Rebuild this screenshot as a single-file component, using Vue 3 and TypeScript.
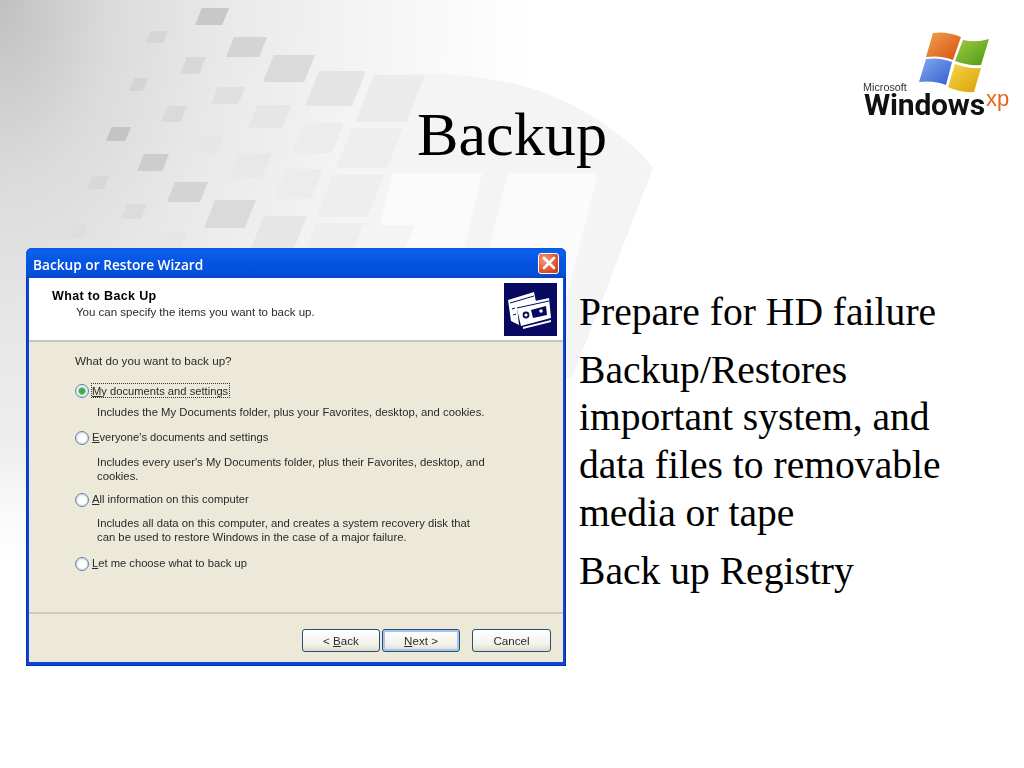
<template>
  <div class="slide">
    <!-- 背景の模様 -->
    <svg class="wallpaper" width="1024" height="768" viewBox="0 0 1024 768">
      <defs>
        <radialGradient id="wash" gradientUnits="userSpaceOnUse" cx="0" cy="0" r="560" gradientTransform="scale(1 1.6)">
          <stop offset="0" stop-color="#c0c0c0" />
          <stop offset="0.2" stop-color="#dbdbdb" />
          <stop offset="0.4" stop-color="#e9e9e9" />
          <stop offset="0.7" stop-color="#f6f6f6" />
          <stop offset="0.95" stop-color="#ffffff" />
        </radialGradient>
        <linearGradient id="fade" gradientUnits="userSpaceOnUse" x1="0" y1="440" x2="0" y2="560">
          <stop offset="0" stop-color="#ffffff" stop-opacity="0" />
          <stop offset="1" stop-color="#ffffff" />
        </linearGradient>
      </defs>
      <rect width="1024" height="768" fill="url(#wash)" />
      <path d="M370 77 C420 70 470 74 515 84 C560 93 625 130 653 168 L633 220 L585 345 L572 378 L300 378 Z" fill="#f4f4f4" />
      <path d="M392 173 L482 173 L462 260 L372 260 Z M508 173 L598 173 L560 325 L470 325 Z" fill="#fbfbfb" />
      <polygon v-for="(s, i) in squares" :key="i" :points="s.points" :fill="s.fill" />
      <rect y="440" width="1024" height="328" fill="url(#fade)" />
    </svg>

    <header class="top">
      <div></div>
      <h1 class="title">Backup</h1>
      <div class="logo">
        <svg width="170" height="110" viewBox="850 20 170 110">
          <defs>
            <linearGradient id="red" x1="0" y1="0" x2="1" y2="1">
              <stop offset="0" stop-color="#f0a050" />
              <stop offset="1" stop-color="#d8500f" />
            </linearGradient>
            <linearGradient id="green" x1="0" y1="0" x2="1" y2="1">
              <stop offset="0" stop-color="#9fcb48" />
              <stop offset="1" stop-color="#4e9a12" />
            </linearGradient>
            <linearGradient id="blue" x1="0" y1="0" x2="1" y2="1">
              <stop offset="0" stop-color="#86a9f0" />
              <stop offset="1" stop-color="#2f5fd0" />
            </linearGradient>
            <linearGradient id="yellow" x1="0" y1="0" x2="1" y2="1">
              <stop offset="0" stop-color="#f5d84a" />
              <stop offset="1" stop-color="#d9a008" />
            </linearGradient>
          </defs>
          <path d="M933 33 Q947 31 961 37 L953 60 Q941 55 926 57 Z" fill="url(#red)" />
          <path d="M963 40 Q976 43 989 39 L981 65 Q968 66 955 61 Z" fill="url(#green)" />
          <path d="M926 59 Q940 57 952 62 L946 85 Q934 80 919 82 Z" fill="url(#blue)" />
          <path d="M955 64 Q968 69 981 68 L974 92 Q960 93 948 87 Z" fill="url(#yellow)" />
        </svg>
        <span class="ms">Microsoft</span>
        <span class="win">Windows</span>
        <span class="xp">xp</span>
      </div>
    </header>

    <main class="content">
      <section class="dialog">
        <div class="titlebar">
          <span>Backup or Restore Wizard</span>
          <button class="close" aria-label="Close">
            <svg width="14" height="14" viewBox="0 0 14 14">
              <path d="M2 2 L12 12 M12 2 L2 12" stroke="#fff" stroke-width="2.6" stroke-linecap="round" />
            </svg>
          </button>
        </div>

        <div class="wiz-head">
          <div class="wiz-text">
            <strong>What to Back Up</strong>
            <span>You can specify the items you want to back up.</span>
          </div>
          <div class="tapes">
            <svg width="53" height="53" viewBox="0 0 53 53">
              <rect width="53" height="53" fill="#07085f" />
              <path d="M4 17 L30 9 L32 19 L13 24 L15 42 L7 38 Z" fill="#fff" />
              <path d="M6 20 L30 13 M8 26 L11 25 M9 32 L12 31" stroke="#07085f" stroke-width="1" />
              <path d="M12 22 L45 15 L47 35 L17 43 Z" fill="#fff" />
              <path d="M13 25 L45 18" stroke="#07085f" stroke-width="1" />
              <path d="M19 44 L47 37 L47 39 L19 46 Z" fill="#fff" />
              <path d="M27 27 L42 23 L43 32 L29 35 Z" fill="#07085f" />
              <circle cx="37" cy="28" r="1.8" fill="#fff" />
              <circle cx="22" cy="32" r="3.4" fill="#07085f" />
              <circle cx="22" cy="32" r="1.6" fill="#fff" />
            </svg>
          </div>
        </div>

        <div class="wiz-body">
          <p class="question">What do you want to back up?</p>
          <div v-for="opt in options" :key="opt.rest" class="option" :style="{ marginTop: opt.top + 'px' }">
            <div class="radio-row">
              <span class="radio" :class="{ checked: opt.checked }"></span>
              <span class="radio-label" :class="{ focused: opt.checked }"><u>{{ opt.key }}</u>{{ opt.rest }}</span>
            </div>
            <p v-if="opt.desc" class="desc" :style="{ marginTop: opt.gap + 'px' }">{{ opt.desc }}</p>
          </div>
        </div>

        <div class="wiz-foot">
          <button class="btn"><span>&lt; <u>B</u>ack</span></button>
          <button class="btn default"><span><u>N</u>ext &gt;</span></button>
          <button class="btn cancel"><span>Cancel</span></button>
        </div>
      </section>

      <div class="points">
        <p v-for="p in points" :key="p">{{ p }}</p>
      </div>
    </main>
  </div>
</template>

<script setup lang="ts">
interface Option {
  key: string;
  rest: string;
  desc?: string;
  checked?: boolean;
  top: number;
  gap?: number;
}

// 左端, 上端, 右端, 下端 (実座標), 色
const raw: [number, number, number, number, string][] = [
  [195, 8, 229, 25, '#c8c8c8'],
  [146, 31, 168, 43, '#d6d6d6'],
  [226, 37, 267, 57, '#d4d4d4'],
  [180, 57, 206, 74, '#d8d8d8'],
  [263, 55, 315, 82, '#dadada'],
  [129, 78, 148, 91, '#d4d4d4'],
  [305, 71, 366, 106, '#e4e4e4'],
  [211, 87, 245, 104, '#e0e0e0'],
  [161, 106, 187, 122, '#dadada'],
  [248, 105, 292, 128, '#e6e6e6'],
  [106, 127, 131, 141, '#c4c4c4'],
  [192, 135, 224, 153, '#e6e6e6'],
  [292, 123, 344, 153, '#ececec'],
  [137, 154, 169, 171, '#cdcdcd'],
  [229, 153, 272, 177, '#e8e8e8'],
  [87, 176, 109, 189, '#d8d8d8'],
  [274, 169, 323, 199, '#ececec'],
  [167, 182, 208, 202, '#d4d4d4'],
  [121, 204, 147, 219, '#dcdcdc'],
  [204, 200, 256, 228, '#dadada'],
  [69, 224, 88, 238, '#dedede'],
  [153, 232, 187, 256, '#e6e6e6'],
  [248, 216, 307, 256, '#e6e6e6'],
  [355, 75, 425, 122, '#ebebeb'],
  [336, 128, 403, 168, '#eeeeee'],
  [316, 175, 384, 217, '#eeeeee'],
  [303, 223, 364, 256, '#eeeeee'],
  [362, 225, 415, 256, '#f4f4f4'],
];

const squares = raw.map(([l, t, r, b, fill]) => {
  const s = (b - t) * 0.4;
  const pts = [
    [l + s, t],
    [r, t],
    [r - s, b],
    [l, b],
  ];
  return { fill, points: pts.map(([x, y]) => `${x},${y}`).join(' ') };
});

const options: Option[] = [
  {
    key: 'M',
    rest: 'y documents and settings',
    desc: 'Includes the My Documents folder, plus your Favorites, desktop, and cookies.',
    checked: true,
    top: 13,
    gap: 6,
  },
  {
    key: 'E',
    rest: "veryone's documents and settings",
    desc: "Includes every user's My Documents folder, plus their Favorites, desktop, and cookies.",
    top: 9,
    gap: 9,
  },
  {
    key: 'A',
    rest: 'll information on this computer',
    desc: 'Includes all data on this computer, and creates a system recovery disk that can be used to restore Windows in the case of a major failure.',
    top: 7,
    gap: 8,
  },
  { key: 'L', rest: 'et me choose what to back up', top: 10 },
];

const points = [
  'Prepare for HD failure',
  'Backup/Restores important system, and data files to removable media or tape',
  'Back up Registry',
];
</script>

<style>
html,
body {
  background: #fff;
}
</style>

<style scoped>
.slide {
  position: relative;
  width: 1024px;
  height: 768px;
  overflow: hidden;
  background: #fff;
}

.wallpaper {
  position: absolute;
  left: 0;
  top: 0;
}

.top {
  position: relative;
  display: grid;
  grid-template-columns: 1fr auto 1fr;
  height: 248px;
}

.title {
  margin: 0;
  padding-top: 98px;
  font-family: 'Liberation Serif', serif;
  font-size: 62.2px;
  line-height: 72px;
  font-weight: 400;
  color: #000;
}

.logo {
  position: relative;
  justify-self: end;
  width: 170px;
  height: 110px;
  margin-top: 20px;
  margin-right: 4px;
  font-family: 'Roboto', sans-serif;
  filter: blur(0.4px);
}

.logo svg {
  display: block;
}

.ms {
  position: absolute;
  left: 13px;
  top: 62px;
  font-family: 'Liberation Sans', sans-serif;
  font-size: 10.8px;
  line-height: 10px;
  color: #333;
}

.win {
  position: absolute;
  left: 14px;
  top: 73px;
  font-size: 30px;
  line-height: 24px;
  font-weight: 700;
  letter-spacing: -0.2px;
  color: #111;
}

.xp {
  position: absolute;
  left: 136px;
  top: 67px;
  font-family: 'Liberation Sans', sans-serif;
  font-size: 22px;
  line-height: 24px;
  color: #e8641b;
}

.content {
  position: relative;
  display: flex;
  align-items: flex-start;
  gap: 13px;
  padding-left: 26px;
}

.dialog {
  display: flex;
  flex-direction: column;
  box-sizing: border-box;
  flex: none;
  width: 540px;
  height: 418px;
  border-radius: 6px 6px 0 0;
  background: #0a46d8;
  padding: 0 3px 4px;
  font-family: 'Liberation Sans', sans-serif;
  font-size: 11.3px;
  color: #2a2a2a;
  box-shadow: inset -1px -1px 0 #07309c, inset 1px 0 0 #0838b0;
  filter: blur(0.3px);
}

.titlebar {
  display: flex;
  align-items: center;
  justify-content: space-between;
  flex: none;
  height: 30px;
  margin: 0 -3px;
  padding: 0 7px 0 7px;
  border-radius: 6px 6px 0 0;
  background: linear-gradient(#0a5ae0 0, #0b60ee 12%, #0553e0 50%, #0450da 85%, #0a44c0 100%);
  color: #fff;
  font-family: 'Open Sans', sans-serif;
  font-size: 13.7px;
  font-weight: 600;
}

.titlebar > span {
  padding-top: 3px;
}

.close {
  display: flex;
  align-items: center;
  justify-content: center;
  width: 21px;
  height: 21px;
  padding: 0;
  border: 1px solid #fff;
  border-radius: 3px;
  background: radial-gradient(circle at 30% 30%, #f09a80, #dc4a20 70%, #c63a14);
}

.wiz-head {
  display: flex;
  align-items: flex-start;
  justify-content: space-between;
  flex: none;
  box-sizing: border-box;
  height: 64px;
  padding: 5px 6px 0 23px;
  background: #fff;
  border-bottom: 2px solid #c9c7bc;
}

.wiz-text {
  display: flex;
  flex-direction: column;
  padding-top: 6px;
}

.wiz-text strong {
  font-size: 12.5px;
  line-height: 14px;
  letter-spacing: 0.35px;
  color: #000;
}

.wiz-text span {
  margin-top: 2px;
  margin-left: 24px;
  font-size: 11.5px;
  line-height: 14px;
}

.tapes {
  width: 53px;
  height: 53px;
}

.tapes svg {
  display: block;
}

.wiz-body {
  flex: 1;
  box-sizing: border-box;
  padding: 12px 0 0 46px;
  background: #ece9d8;
  border-bottom: 2px solid #cfccbd;
}

.question {
  margin: 0;
  font-size: 11.65px;
  line-height: 14px;
}

.radio-row {
  display: flex;
  align-items: center;
  gap: 3px;
  height: 18px;
  font-size: 11.2px;
}

.radio {
  flex: none;
  box-sizing: border-box;
  width: 14px;
  height: 14px;
  margin-top: 1px;
  border: 1px solid #5b86ad;
  border-radius: 50%;
  background: radial-gradient(circle at 60% 60%, #fff 35%, #dcd9cc);
  box-shadow: inset 0 0 0 1px #d4dbe2;
}

.radio.checked {
  background: radial-gradient(circle, #35b04a 0 2.5px, #8fd19c 3.5px, #fff 4.5px);
}

.radio-label.focused {
  outline: 1px dotted #333;
  padding: 1px 1px 0 0;
}

.desc {
  width: 392px;
  margin: 0 0 0 22px;
  line-height: 14px;
}

.wiz-foot {
  display: flex;
  align-items: flex-start;
  flex: none;
  height: 48px;
  box-sizing: border-box;
  padding: 15px 12px 0 273px;
  gap: 2px;
  background: #ece9d8;
}

.btn {
  display: flex;
  align-items: center;
  justify-content: center;
  box-sizing: border-box;
  width: 78px;
  height: 23px;
  padding: 0;
  border: 1px solid #2a4f74;
  border-radius: 3px;
  background: linear-gradient(#ffffff, #f2f1ea 70%, #dcd8cc);
  font-family: 'Liberation Sans', sans-serif;
  font-size: 11.6px;
  color: #2a2a2a;
}

.btn.default {
  box-shadow: inset 0 0 0 2px #a6c4ee;
}

.btn.cancel {
  width: 79px;
  margin-left: 10px;
}

.points {
  width: 372px;
  padding-top: 41px;
  font-family: 'Liberation Serif', serif;
  font-size: 39.6px;
  line-height: 47.7px;
  color: #000;
}

.points p {
  margin: 0 0 10px;
}
</style>
